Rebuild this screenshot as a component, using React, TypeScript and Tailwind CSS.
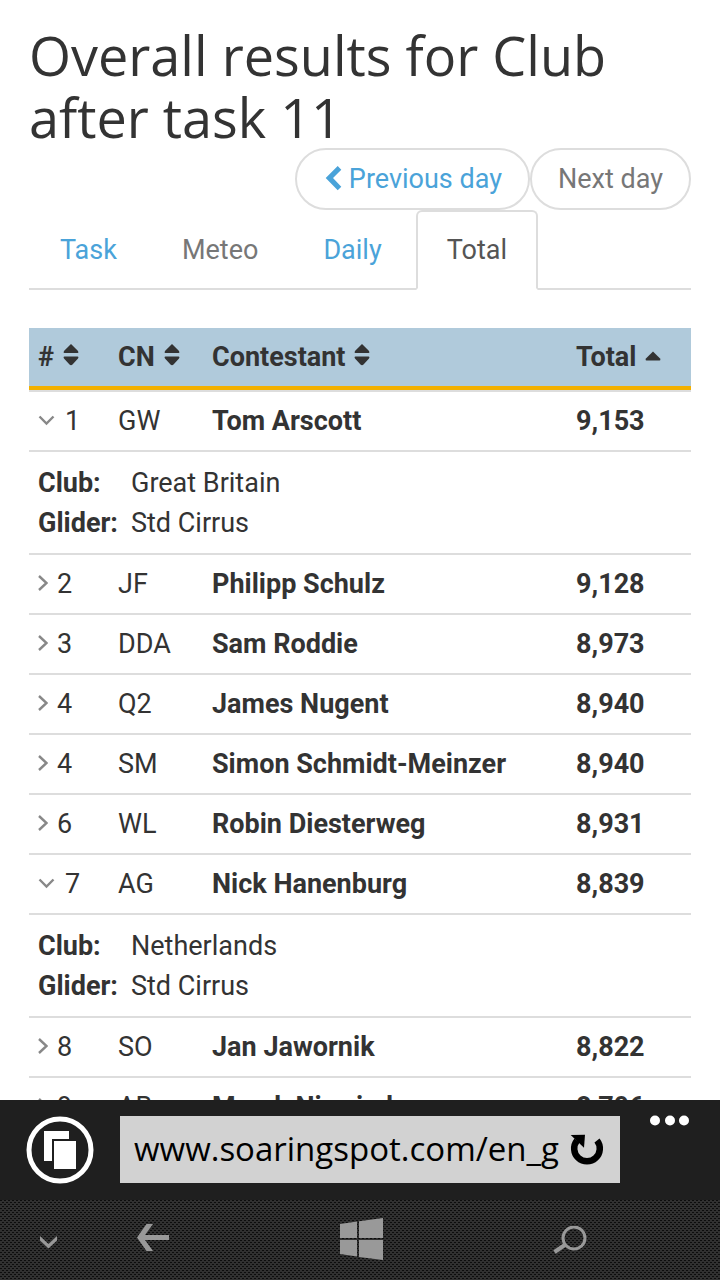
import { Fragment } from 'react'

const tabs = [
  { label: 'Task', color: 'border-transparent text-[#4aa3d9]' },
  { label: 'Meteo', color: 'border-transparent text-[#777777]' },
  { label: 'Daily', color: 'border-transparent text-[#4aa3d9]' },
  { label: 'Total', color: 'border-[#dddddd] border-b-white bg-white text-[#555555]' },
]

const columns = [
  { label: '#', width: 'w-[80px]' },
  { label: 'CN', width: 'w-[94px]' },
  { label: 'Contestant', width: 'w-auto' },
  { label: 'Total', width: 'w-[124px]', sorted: true },
]

const rows = [
  { rank: '1', cn: 'GW', name: 'Tom Arscott', total: '9,153', club: 'Great Britain', glider: 'Std Cirrus' },
  { rank: '2', cn: 'JF', name: 'Philipp Schulz', total: '9,128' },
  { rank: '3', cn: 'DDA', name: 'Sam Roddie', total: '8,973' },
  { rank: '4', cn: 'Q2', name: 'James Nugent', total: '8,940' },
  { rank: '4', cn: 'SM', name: 'Simon Schmidt-Meinzer', total: '8,940' },
  { rank: '6', cn: 'WL', name: 'Robin Diesterweg', total: '8,931' },
  { rank: '7', cn: 'AG', name: 'Nick Hanenburg', total: '8,839', club: 'Netherlands', glider: 'Std Cirrus' },
  { rank: '8', cn: 'SO', name: 'Jan Jawornik', total: '8,822' },
  { rank: '9', cn: 'AB', name: 'Marek Niewiada', total: '8,796' },
]

function SortIcon({ sorted }: { sorted?: boolean }) {
  return (
    <svg width="16" height="26" viewBox="0 0 16 26" fill="#333333" aria-hidden="true">
      {sorted ? (
        <path d="M8 7.500 14.800 14.200Q16.200 16.500 14.500 16.500H1.500Q-.2 16.500 1.200 14.200Z" />
      ) : (
        <path d="M8 0 14.800 6.700Q16.200 9 14.500 9H1.500Q-.2 9 1.200 6.700ZM1.500 12.500h13q1.700 0 .3 2.300L9.500 20.500q-1.500 1.500-3 0L1.200 14.800Q-.2 12.500 1.500 12.500Z" />
      )}
    </svg>
  )
}

function Toggle({ open }: { open: boolean }) {
  return (
    <button type="button" aria-label={open ? 'Hide details' : 'Show details'} className="shrink-0">
      {open ? (
        <svg width="18" height="20" viewBox="0 0 18 20" fill="none" stroke="#888888" strokeWidth="2.400">
          <path d="M1.500 5.500 8.500 12.500 15.500 5.500" />
        </svg>
      ) : (
        <svg width="10" height="20" viewBox="0 0 10 20" fill="none" stroke="#888888" strokeWidth="2.400">
          <path d="M1 2 8.500 9 1 16" />
        </svg>
      )}
    </button>
  )
}

function DayNav() {
  return (
    <div className="flex justify-end">
      <button type="button" className="flex h-[62px] items-center gap-1 rounded-[31px] border-2 border-[#dddddd] px-[26px] text-[#4aa3d9]">
        <svg width="22" height="28" viewBox="0 0 22 28" fill="#4aa3d9" aria-hidden="true">
          <path d="M2.700 13 14.700 1 18.300 4.700 10 13 18.300 21.700 14.700 25.300Z" />
        </svg>
        Previous day
      </button>
      <button type="button" className="h-[62px] rounded-[31px] border-2 border-[#dddddd] px-[26px] text-[#777777]">
        Next day
      </button>
    </div>
  )
}

function Tabs() {
  return (
    <div className="flex gap-[3px] border-b-2 border-[#dddddd]">
      {tabs.map((tab) => (
        <a
          key={tab.label}
          href="#"
          className={`-mb-[2px] flex h-20 items-center rounded-t-md border-2 px-[29px] ${tab.color}`}
        >
          {tab.label}
        </a>
      ))}
    </div>
  )
}

function Results() {
  return (
    <table className="mt-[38px] w-full table-fixed border-separate border-spacing-0 text-left">
      <thead>
        <tr className="bg-[#b0cadb]">
          {columns.map((col) => (
            <th key={col.label} className={`h-[62px] border-b-4 border-[#f2b000] pl-[9px] ${col.width}`}>
              <span className="flex items-center gap-[9px]">
                {col.label}
                <SortIcon sorted={col.sorted} />
              </span>
            </th>
          ))}
        </tr>
        <tr aria-hidden="true">
          <td colSpan={4} className="h-[2px] bg-[#dddddd] p-0" />
        </tr>
      </thead>
      <tbody>
        {rows.map((row) => (
          <Fragment key={row.cn}>
            <tr>
              <td className="h-[60px] border-b-2 border-[#dddddd] pl-[9px]">
                <span className="flex items-center gap-[9px]">
                  <Toggle open={!!row.club} />
                  {row.rank}
                </span>
              </td>
              <td className="border-b-2 border-[#dddddd] pl-[9px]">{row.cn}</td>
              <td className="border-b-2 border-[#dddddd] pl-[9px] font-bold">{row.name}</td>
              <td className="border-b-2 border-[#dddddd] pl-[9px] font-bold">{row.total}</td>
            </tr>
            {row.club && (
              <tr>
                <td colSpan={4} className="h-[103px] border-b-2 border-[#dddddd] pl-[9px]">
                  <dl className="grid grid-cols-[93px_1fr] leading-10">
                    <dt className="font-bold">Club:</dt>
                    <dd>{row.club}</dd>
                    <dt className="font-bold">Glider:</dt>
                    <dd>{row.glider}</dd>
                  </dl>
                </td>
              </tr>
            )}
          </Fragment>
        ))}
      </tbody>
    </table>
  )
}

function AddressBar() {
  return (
    <div className="flex h-[100px] shrink-0 items-start bg-[#1f1f1f] pl-[26px]">
      <button type="button" aria-label="Tabs" className="mt-4">
        <svg width="68" height="68" viewBox="0 0 68 68" fill="white">
          <circle cx="34" cy="34" r="31" fill="none" stroke="white" strokeWidth="5" />
          <path d="M18 15h25v8H26v22h-8ZM28 25h22v28H28Z" />
        </svg>
      </button>
      <div className="mt-4 ml-[26px] flex h-[67px] flex-1 items-center bg-[#d2d2d2] pr-4 pl-[14px]">
        <input
          aria-label="Address"
          defaultValue="www.soaringspot.com/en_g"
          className="w-full min-w-0 flex-1 pb-[2px] font-['Open_Sans',sans-serif] text-[33px] text-black outline-none"
        />
        <button type="button" aria-label="Refresh" className="ml-1 shrink-0">
          <svg width="34" height="34" viewBox="0 0 34 34">
            <path d="M7 7.500A12.800 12.800 0 1 0 27 7.500" fill="none" stroke="black" strokeWidth="6.500" />
            <path d="M.7 2 15 1.700 14 14.700Z" />
          </svg>
        </button>
      </div>
      <button type="button" aria-label="More" className="mt-[15px] mr-[30px] ml-[30px]">
        <svg width="40" height="11" viewBox="0 0 40 11" fill="white">
          <circle cx="5" cy="5.500" r="5" />
          <circle cx="20" cy="5.500" r="5" />
          <circle cx="34" cy="5.500" r="5" />
        </svg>
      </button>
    </div>
  )
}

function PhoneKeys() {
  return (
    <nav className="flex h-20 shrink-0 items-center bg-[#303030] bg-[conic-gradient(from_270deg_at_2px_1px,#0c0c0c_25%,transparent_0),conic-gradient(from_270deg_at_2px_1px,#0c0c0c_25%,transparent_0)] bg-[size:4px_4px] bg-[position:0_0,2px_2px] pr-[133px] pl-10">
      <button type="button" aria-label="Hide keys" className="mr-20">
        <svg width="17" height="20" viewBox="0 0 17 20" fill="#999999">
          <path d="M0 6v4.500L8.500 18.500 17 10.500V6L8.500 14Z" />
        </svg>
      </button>
      <div className="flex flex-1 items-center justify-between">
        <button type="button" aria-label="Back">
          <svg width="32" height="32" viewBox="0 0 32 32" fill="#999999">
            <path d="M0 13.500 9.500 0H16L8 11H32v5H8L16 27H9.500Z" />
          </svg>
        </button>
        <button type="button" aria-label="Start">
          <svg width="43" height="44" viewBox="0 0 43 44" fill="#999999">
            <path d="M0 6 17 3.500V20H0ZM19 3.200 43 0V20H19ZM0 22H17V38.500L0 36ZM19 22H43V42L19 39Z" />
          </svg>
        </button>
        <button type="button" aria-label="Search">
          <svg width="34" height="28" viewBox="0 0 34 28" fill="none" stroke="#999999" strokeWidth="3">
            <circle cx="21" cy="12" r="11" />
            <path d="M12.500 18.500 1.500 26" strokeWidth="4" />
          </svg>
        </button>
      </div>
    </nav>
  )
}

export default function App() {
  return (
    <div className="flex h-screen flex-col overflow-hidden bg-white font-[Roboto,sans-serif] text-[27px] text-[#333333]">
      <main className="min-h-0 flex-1 overflow-hidden px-[29px] pt-6">
        <h1 className="font-['Open_Sans',sans-serif] text-[54px] leading-[62px]">
          Overall results for Club
          <br />
          after task 11
        </h1>
        <DayNav />
        <Tabs />
        <Results />
      </main>
      <AddressBar />
      <PhoneKeys />
    </div>
  )
}
